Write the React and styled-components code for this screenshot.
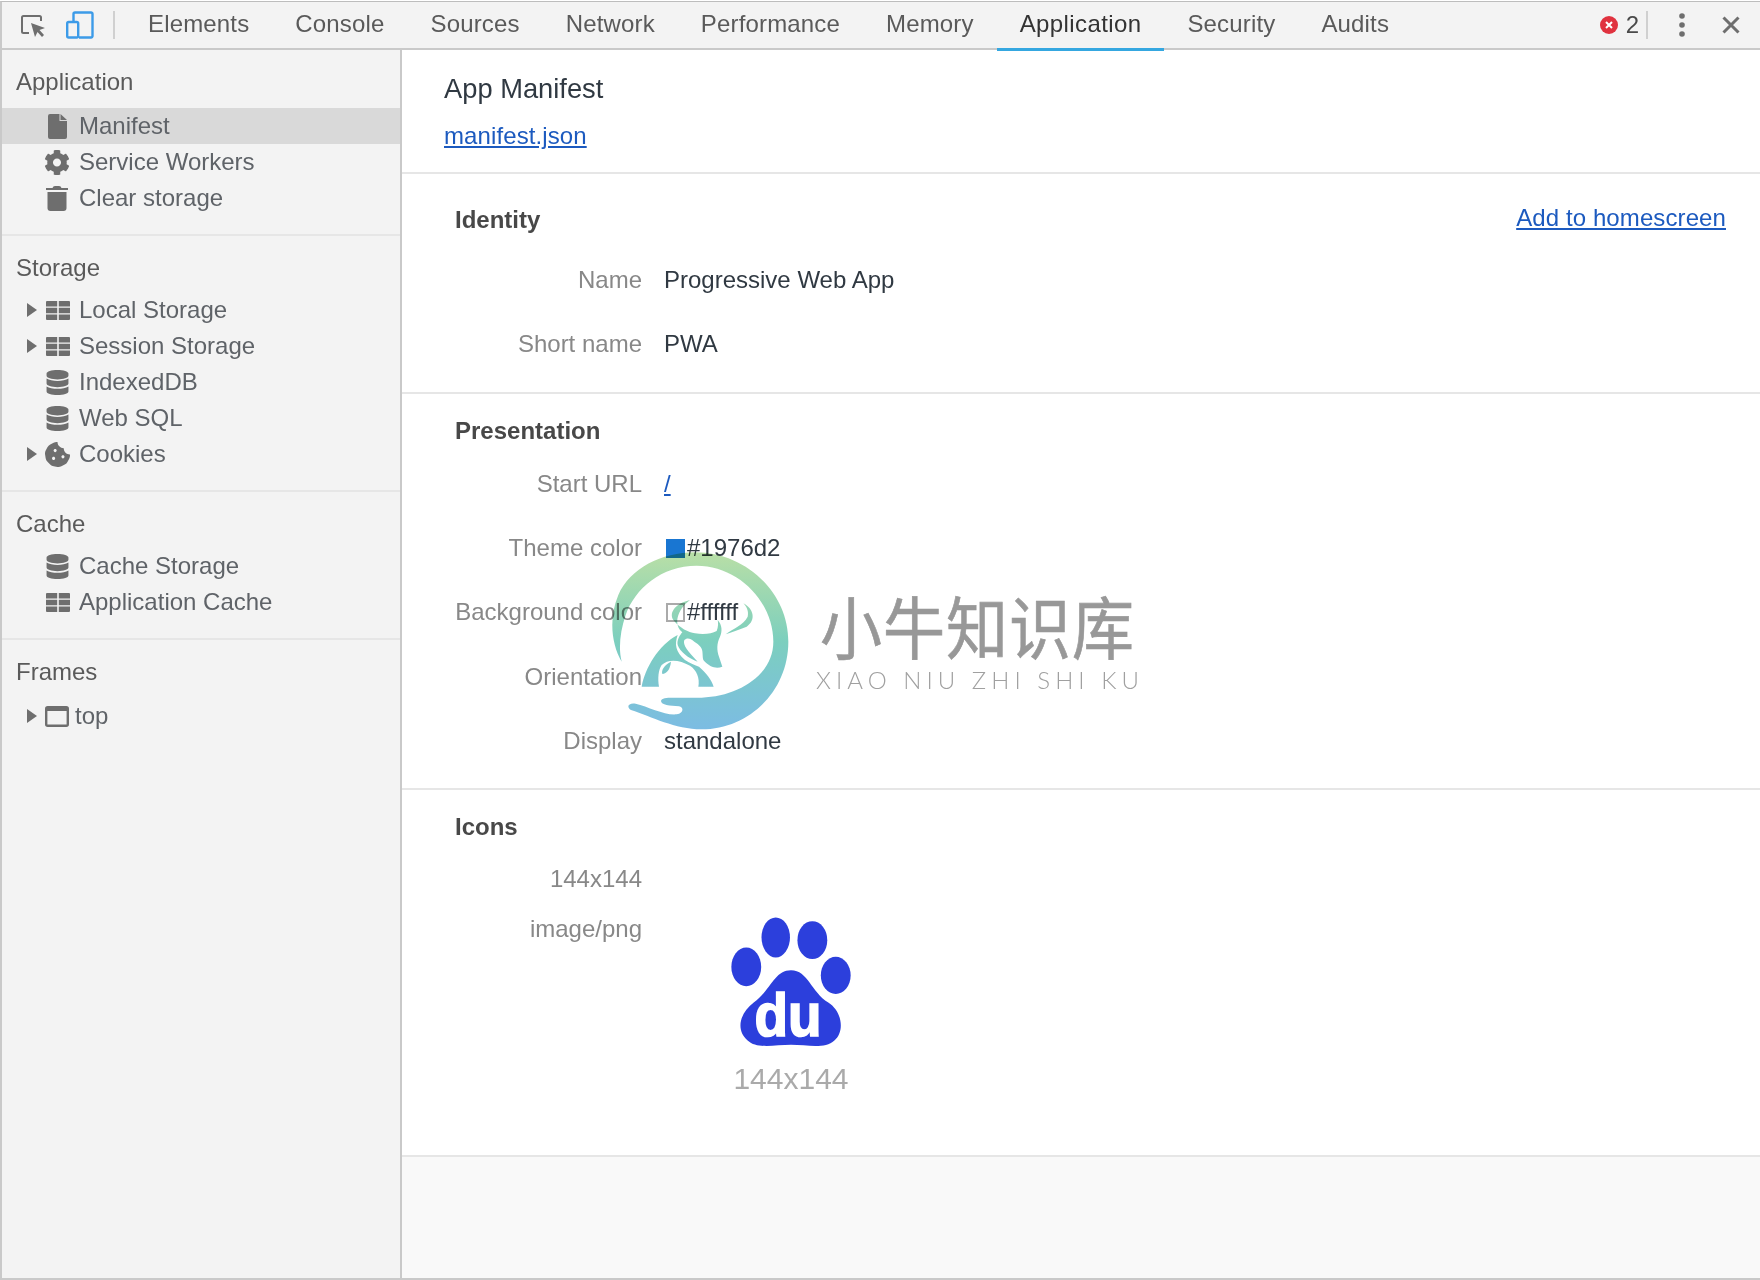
import React from 'react';
import styled, { createGlobalStyle } from 'styled-components';
import { FaCog, FaDatabase, FaCookieBite } from 'react-icons/fa';

const Global = createGlobalStyle`
  html, body { margin: 0; padding: 0; background: #fff; }
  body { font-family: "Liberation Sans", Arial, sans-serif; overflow: hidden; }
`;

const Page = styled.div`
  position: relative;
  box-sizing: border-box;
  width: 1760px;
  height: 1280px;
  padding-top: 1px;
  display: flex;
  flex-direction: column;
  overflow: hidden;
  border-bottom: 2px solid #c9c9c9;
`;

/* top bar */
const Toolbar = styled.div`
  box-sizing: border-box;
  height: 49px;
  flex: none;
  display: flex;
  align-items: stretch;
  background: #f3f3f3;
  border-top: 1px solid #bdbdbd;
  border-bottom: 2px solid #c9c9c9;
  border-left: 2px solid #c9c9c9;
`;

const ToolIcons = styled.div`
  width: 123px;
  flex: none;
  display: flex;
  align-items: center;
`;

const ToolDivider = styled.div`
  width: 2px;
  height: 28px;
  background: #d0d0d0;
  margin-left: ${props => props.left || 0}px;
  flex: none;
`;

const Tab = styled.div`
  position: relative;
  padding: 0 23px;
  font-size: 24px;
  line-height: 44px;
  letter-spacing: ${props => (props.active ? '0.4px' : '0.16px')};
  color: ${props => (props.active ? '#333' : '#5a5a5a')};

  &::after {
    content: '';
    display: ${props => (props.active ? 'block' : 'none')};
    position: absolute;
    left: 0;
    right: 0;
    bottom: -3px;
    height: 3px;
    background: #35a7e0;
  }
`;

const ToolRight = styled.div`
  margin-left: auto;
  display: flex;
  align-items: center;
  padding-right: 20px;
`;

const ErrorCount = styled.span`
  font-size: 24px;
  color: #4a4a4a;
  margin-left: 8px;
`;

/* body */
const Body = styled.div`
  flex: 1;
  min-height: 0;
  display: flex;
`;

const Sidebar = styled.div`
  box-sizing: border-box;
  width: 402px;
  flex: none;
  background: #f3f3f3;
  border-left: 2px solid #c9c9c9;
  border-right: 2px solid #c9c9c9;
`;

const SideSection = styled.div`
  padding-bottom: 18px;
  border-bottom: ${props => (props.last ? 'none' : '2px solid #e6e6e6')};
`;

const SideHeading = styled.div`
  box-sizing: border-box;
  height: ${props => props.h || 56}px;
  padding: 15px 0 0 14px;
  font-size: 24px;
  line-height: 34px;
  color: #5a5a5a;
`;

const Row = styled.div`
  box-sizing: border-box;
  height: 36px;
  display: flex;
  align-items: center;
  padding-left: 25px;
  background: ${props => (props.selected ? '#d9d9d9' : 'transparent')};
  font-size: 24px;
  color: #5f6368;
`;

const ArrowSlot = styled.div`
  width: 17px;
  flex: none;
`;

const Arrow = styled.div`
  width: 0;
  height: 0;
  border-style: solid;
  border-width: 7px 0 7px 10px;
  border-color: transparent transparent transparent #6e6e6e;
`;

const IconSlot = styled.div`
  width: 26px;
  height: 26px;
  flex: none;
  display: flex;
  align-items: center;
  justify-content: center;
  color: #6e6e6e;
`;

const RowLabel = styled.span`
  margin-left: ${props => props.gap || 9}px;
  white-space: nowrap;
`;

/* main panel */
const Main = styled.div`
  flex: 1;
  min-width: 0;
  display: flex;
  flex-direction: column;
  background: #f9f9f9;
`;

const Header = styled.div`
  box-sizing: border-box;
  height: 124px;
  padding: 20px 0 0 42px;
  background: #fff;
  border-bottom: 2px solid #e6e6e6;
`;

const AppTitle = styled.div`
  font-size: 27.300px;
  line-height: 38px;
  color: #303942;
`;

const ManifestLink = styled.a`
  display: inline-block;
  margin-top: 11px;
  font-size: 24px;
  line-height: 34px;
  letter-spacing: 0.1px;
  color: #1c5abf;
  text-decoration: underline;
`;

const Section = styled.div`
  background: #fff;
  padding: ${props => props.top || 20}px 34px ${props => props.bottom || 16}px 53px;
  border-bottom: 2px solid #e6e6e6;
`;

const SectionHead = styled.div`
  display: flex;
  justify-content: space-between;
  align-items: center;
  height: 34px;
  margin-bottom: ${props => props.after || 4}px;
`;

const SectionTitle = styled.div`
  font-size: 24px;
  font-weight: 700;
  color: #484848;
`;

const HomeLink = styled.a`
  font-size: 24px;
  letter-spacing: 0.1px;
  color: #1c5abf;
  text-decoration: underline;
  position: relative;
  top: -2px;
`;

const Field = styled.div`
  display: flex;
  align-items: ${props => (props.tall ? 'flex-start' : 'center')};
  min-height: ${props => props.h || 64}px;
  margin-left: -53px;
`;

const FieldLabel = styled.div`
  box-sizing: border-box;
  width: 240px;
  flex: none;
  text-align: right;
  font-size: 24px;
  line-height: ${props => props.lh || 'normal'};
  color: #888;
  white-space: nowrap;
`;

const FieldValue = styled.div`
  margin-left: 22px;
  display: flex;
  align-items: center;
  font-size: 24px;
  color: #303942;
`;

const ValueLink = styled.a`
  color: #1c5abf;
  text-decoration: underline;
`;

const Swatch = styled.span`
  box-sizing: border-box;
  width: 19px;
  height: 19px;
  margin: 0 2px 0 2px;
  background: ${props => props.color};
  border: ${props => (props.outlined ? '2px solid #aaa' : 'none')};
`;

const IconPreview = styled.div`
  margin-left: 88px;
  display: flex;
  flex-direction: column;
  align-items: center;
  padding-top: 12px;
`;

const IconCaption = styled.div`
  margin-top: 12px;
  font-size: 30px;
  line-height: 34px;
  color: #aaa;
`;

const Filler = styled.div`
  flex: 1;
`;

/* watermark sits on top of everything */
const Watermark = styled.div`
  position: absolute;
  left: 605px;
  top: 545px;
  display: flex;
  mix-blend-mode: multiply;
  pointer-events: none;
`;

const MarkText = styled.div`
  margin-left: 16px;
  padding-top: 37px;
`;

const MarkCjk = styled.div`
  font-family: "Noto Sans CJK SC", sans-serif;
  font-weight: 400;
  font-size: 62px;
  line-height: 76px;
  letter-spacing: 1px;
  margin-left: 4px;
  color: #989898;
  -webkit-text-stroke: 0.6px #989898;
  white-space: nowrap;
  transform: scaleY(1.1);
  transform-origin: top left;
`;

const MarkLatin = styled.div`
  margin-top: 8px;
  font-family: Lato, sans-serif;
  font-weight: 300;
  font-size: 24px;
  line-height: 28px;
  letter-spacing: 5.050px;
  color: #a0a0a0;
  white-space: nowrap;
`;

const InspectIcon = () => (
  <svg width="26" height="26" viewBox="0 0 26 26" style={{ marginLeft: 18 }}>
    <path d="M9 21H3.500A1.500 1.500 0 0 1 2 19.500V5.500A1.500 1.500 0 0 1 3.500 4H19.500A1.500 1.500 0 0 1 21 5.500V9" fill="none" stroke="#6e6e6e" strokeWidth="2" />
    <path d="M11 11l14 5-5.500 2 4.500 5-2 2-4.500-5-2.500 5z" fill="#6e6e6e" />
  </svg>
);

const DeviceIcon = () => (
  <svg width="28" height="28" viewBox="0 0 28 28" style={{ marginLeft: 20 }}>
    <path d="M7.500 11V3A1.500 1.500 0 0 1 9 1.500H25A1.500 1.500 0 0 1 26.500 3V25A1.500 1.500 0 0 1 25 26.500H13" fill="none" stroke="#3c9be8" strokeWidth="2.400" />
    <rect x="1.200" y="11" width="11" height="15.500" rx="1.500" fill="none" stroke="#3c9be8" strokeWidth="2.400" />
  </svg>
);

const ErrorIcon = () => (
  <svg width="18" height="18" viewBox="0 0 18 18">
    <circle cx="9" cy="9" r="9" fill="#e0323f" />
    <path d="M6 6l6 6M12 6l-6 6" stroke="#fff" strokeWidth="2" />
  </svg>
);

const DotsIcon = () => (
  <svg width="6" height="24" viewBox="0 0 6 24" style={{ marginLeft: 31 }}>
    <circle cx="3" cy="3" r="2.800" fill="#6e6e6e" />
    <circle cx="3" cy="12" r="2.800" fill="#6e6e6e" />
    <circle cx="3" cy="21" r="2.800" fill="#6e6e6e" />
  </svg>
);

const CloseIcon = () => (
  <svg width="18" height="18" viewBox="0 0 18 18" style={{ marginLeft: 37 }}>
    <path d="M1.500 1.500l15 15M16.500 1.500l-15 15" stroke="#6e6e6e" strokeWidth="3" />
  </svg>
);

const FileIcon = () => (
  <svg width="19" height="25" viewBox="0 0 19 25">
    <path d="M2 0H11.500V7H19V23A2 2 0 0 1 17 25H2A2 2 0 0 1 0 23V2A2 2 0 0 1 2 0ZM12.500 0L19 6H12.500Z" fill="#6e6e6e" />
  </svg>
);

const TrashIcon = () => (
  <svg width="22" height="26" viewBox="0 0 22 26">
    <path d="M0 3H6.500Q7 1 9 1H13Q15 1 15.500 3H22V5H0Z" fill="#6e6e6e" />
    <path d="M1.500 7H20.500V23A3 3 0 0 1 17.500 26H4.500A3 3 0 0 1 1.500 23Z" fill="#6e6e6e" />
  </svg>
);

const TableIcon = () => (
  <svg width="24" height="19" viewBox="0 0 24 19" style={{ marginLeft: 2 }}>
    <path d="M1 0H11.200V5.400H0V1A1 1 0 0 1 1 0ZM12.800 0H23A1 1 0 0 1 24 1V5.400H12.800ZM0 6.800H11.200V12.200H0ZM12.800 6.800H24V12.200H12.800ZM0 13.600H11.200V19H1A1 1 0 0 1 0 18ZM12.800 13.600H24V18A1 1 0 0 1 23 19H12.800Z" fill="#6e6e6e" />
  </svg>
);

const FrameIcon = () => (
  <svg width="24" height="21" viewBox="0 0 24 21">
    <rect x="1.200" y="1.200" width="21.600" height="18.600" rx="1.500" fill="none" stroke="#6e6e6e" strokeWidth="2.400" />
    <rect x="1" y="1" width="22" height="4" fill="#6e6e6e" />
  </svg>
);

const BaiduLogo = () => (
  <svg width="122" height="134" viewBox="270 85 360 395">
    <g fill="#2c3fdc">
      <ellipse cx="405" cy="148" rx="42" ry="59" />
      <ellipse cx="513" cy="156" rx="44" ry="56" />
      <ellipse cx="318" cy="235" rx="44" ry="57" />
      <ellipse cx="582" cy="260" rx="44" ry="55" />
      <path d="M450 245C500 245 510 310 560 340C600 365 610 425 578 452C550 478 500 465 450 465C400 465 350 478 322 452C285 420 300 370 340 340C390 305 400 245 450 245Z" />
    </g>
    <text x="342" y="438" fontFamily="Liberation Sans, sans-serif" fontWeight="700" fontSize="178" fill="#fff" stroke="#fff" strokeWidth="5" textLength="198" lengthAdjust="spacingAndGlyphs">du</text>
  </svg>
);

const NiuLogo = () => (
  <svg width="195" height="195" viewBox="0 0 585 585">
    <defs>
      <linearGradient id="niu" gradientUnits="userSpaceOnUse" x1="0" y1="22" x2="0" y2="553">
        <stop offset="0" stopColor="#b9dfa6" />
        <stop offset="0.5" stopColor="#7ccfbe" />
        <stop offset="1" stopColor="#7cbce3" />
      </linearGradient>
    </defs>
    {/* ring that ends in the open hand */}
    <path fill="url(#niu)" d="M50 350C20 300 10 220 40 150C75 70 170 22 270 22C420 22 550 140 550 290C550 440 430 553 290 553C210 553 140 515 78 495C62 485 72 472 92 476C130 485 180 512 215 508C235 505 238 488 222 484C195 482 168 480 168 468C170 456 195 458 225 458H290C400 455 505 390 505 290C505 170 400 62 275 62C170 62 90 130 62 210C45 260 40 310 50 350Z" />
    {/* bull */}
    <g fill="url(#niu)">
      <path d="M110 425C120 370 160 300 218 270C208 300 212 320 240 345C255 355 270 360 282 365C305 385 320 405 326 425H280C285 400 275 375 255 362C225 345 190 340 170 360C160 375 158 400 162 425Z" />
      <path d="M255 165C215 175 190 200 205 225C225 250 250 262 270 265C300 270 320 265 335 258C340 245 340 235 338 225C352 240 352 260 345 275C335 295 335 315 342 335L352 365C335 372 315 368 295 345C290 320 300 310 268 290C255 278 245 278 238 285C232 300 250 320 278 350C250 340 225 320 218 300C215 285 225 270 232 262C205 240 215 195 255 165Z" />
      <path d="M415 175C445 190 455 225 425 245C400 255 380 262 362 268C385 250 415 240 428 215C432 200 425 185 415 175Z" />
      <path d="M198 350C178 360 168 375 172 387C185 385 195 375 198 350Z" />
    </g>
  </svg>
);

const tabs = ['Elements', 'Console', 'Sources', 'Network', 'Performance', 'Memory', 'Application', 'Security', 'Audits'];

const SideRow = ({ arrow, icon, label, selected, gap }) => (
  <Row selected={selected}>
    <ArrowSlot>{arrow && <Arrow />}</ArrowSlot>
    <IconSlot>{icon}</IconSlot>
    <RowLabel gap={gap}>{label}</RowLabel>
  </Row>
);

const App = () => {
  return (
    <Page>
      <Global />
      <Toolbar>
        <ToolIcons>
          <InspectIcon />
          <DeviceIcon />
          <ToolDivider left={19} />
        </ToolIcons>
        {tabs.map(name => (
          <Tab key={name} active={name === 'Application'}>{name}</Tab>
        ))}
        <ToolRight>
          <ErrorIcon />
          <ErrorCount>2</ErrorCount>
          <ToolDivider left={7} />
          <DotsIcon />
          <CloseIcon />
        </ToolRight>
      </Toolbar>
      <Body>
        <Sidebar>
          <SideSection>
            <SideHeading h={58}>Application</SideHeading>
            <SideRow selected icon={<FileIcon />} label="Manifest" />
            <SideRow icon={<FaCog size={27} />} label="Service Workers" />
            <SideRow icon={<TrashIcon />} label="Clear storage" />
          </SideSection>
          <SideSection>
            <SideHeading>Storage</SideHeading>
            <SideRow arrow icon={<TableIcon />} label="Local Storage" />
            <SideRow arrow icon={<TableIcon />} label="Session Storage" />
            <SideRow icon={<FaDatabase size={25} />} label="IndexedDB" />
            <SideRow icon={<FaDatabase size={25} />} label="Web SQL" />
            <SideRow arrow icon={<FaCookieBite size={25} />} label="Cookies" />
          </SideSection>
          <SideSection>
            <SideHeading>Cache</SideHeading>
            <SideRow icon={<FaDatabase size={25} />} label="Cache Storage" />
            <SideRow icon={<TableIcon />} label="Application Cache" />
          </SideSection>
          <SideSection last>
            <SideHeading h={58}>Frames</SideHeading>
            <SideRow arrow icon={<FrameIcon />} label="top" gap={5} />
          </SideSection>
        </Sidebar>
        <Main>
          <Header>
            <AppTitle>App Manifest</AppTitle>
            <ManifestLink>manifest.json</ManifestLink>
          </Header>
          <Section top={29}>
            <SectionHead after={11}>
              <SectionTitle>Identity</SectionTitle>
              <HomeLink>Add to homescreen</HomeLink>
            </SectionHead>
            <Field>
              <FieldLabel>Name</FieldLabel>
              <FieldValue>Progressive Web App</FieldValue>
            </Field>
            <Field>
              <FieldLabel>Short name</FieldLabel>
              <FieldValue>PWA</FieldValue>
            </Field>
          </Section>
          <Section>
            <SectionHead>
              <SectionTitle>Presentation</SectionTitle>
            </SectionHead>
            <Field>
              <FieldLabel>Start URL</FieldLabel>
              <FieldValue><ValueLink>/</ValueLink></FieldValue>
            </Field>
            <Field>
              <FieldLabel>Theme color</FieldLabel>
              <FieldValue><Swatch color="#1976d2" />#1976d2</FieldValue>
            </Field>
            <Field>
              <FieldLabel>Background color</FieldLabel>
              <FieldValue><Swatch color="#ffffff" outlined />#ffffff</FieldValue>
            </Field>
            <Field h={66}>
              <FieldLabel>Orientation</FieldLabel>
              <FieldValue />
            </Field>
            <Field h={62}>
              <FieldLabel>Display</FieldLabel>
              <FieldValue>standalone</FieldValue>
            </Field>
          </Section>
          <Section bottom={59}>
            <SectionHead after={10}>
              <SectionTitle>Icons</SectionTitle>
            </SectionHead>
            <Field h={50}>
              <FieldLabel>144x144</FieldLabel>
            </Field>
            <Field tall h={50}>
              <FieldLabel lh="50px">image/png</FieldLabel>
              <IconPreview>
                <BaiduLogo />
                <IconCaption>144x144</IconCaption>
              </IconPreview>
            </Field>
          </Section>
          <Filler />
        </Main>
      </Body>
      <Watermark>
        <NiuLogo />
        <MarkText>
          <MarkCjk>小牛知识库</MarkCjk>
          <MarkLatin>XIAO NIU ZHI SHI KU</MarkLatin>
        </MarkText>
      </Watermark>
    </Page>
  );
};

export default App;
